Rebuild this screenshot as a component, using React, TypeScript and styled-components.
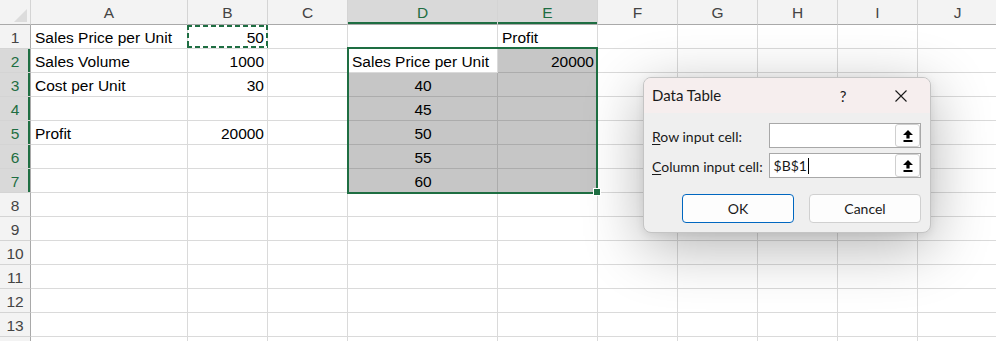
import styled, { createGlobalStyle, css } from "styled-components";

const GREEN = "#1e6e42";

type Align = "left" | "right" | "center";

type TCell = {
  text: string;
  align: Align;
};

const columns: { key: string; width: number }[] = [
  { key: "A", width: 157 },
  { key: "B", width: 80 },
  { key: "C", width: 80 },
  { key: "D", width: 150 },
  { key: "E", width: 100 },
  { key: "F", width: 80 },
  { key: "G", width: 80 },
  { key: "H", width: 80 },
  { key: "I", width: 80 },
  { key: "J", width: 80 },
];

const ROW_COUNT = 13;

const cells: Record<string, TCell> = {
  A1: { text: "Sales Price per Unit", align: "left" },
  B1: { text: "50", align: "right" },
  E1: { text: "Profit", align: "left" },
  A2: { text: "Sales Volume", align: "left" },
  B2: { text: "1000", align: "right" },
  D2: { text: "Sales Price per Unit", align: "left" },
  E2: { text: "20000", align: "right" },
  A3: { text: "Cost per Unit", align: "left" },
  B3: { text: "30", align: "right" },
  D3: { text: "40", align: "center" },
  D4: { text: "45", align: "center" },
  A5: { text: "Profit", align: "left" },
  B5: { text: "20000", align: "right" },
  D5: { text: "50", align: "center" },
  D6: { text: "55", align: "center" },
  D7: { text: "60", align: "center" },
};

// selected range D2:E7, active cell D2
const selCols = ["D", "E"];
const inSelRows = (row: number) => row >= 2 && row <= 7;

const GlobalStyle = createGlobalStyle`
  html, body {
    margin: 0;
    padding: 0;
    background: #ffffff;
  }
  * {
    box-sizing: border-box;
  }
`;

const Page = styled.div`
  position: relative;
  width: 996px;
  height: 341px;
  overflow: hidden;
  background: #ffffff;
  font-family: "Liberation Sans", Arial, sans-serif;
`;

const Sheet = styled.div`
  display: grid;
  grid-template-columns: 31px ${columns.map((c) => `${c.width}px`).join(" ")};
  grid-template-rows: 25px;
  grid-auto-rows: 24px;
  font-size: 15.5px;
  color: #000000;
`;

// every grid item gets its own line/column so the overlays don't push cells around
type Pos = { $col: number; $row: number };
const placed = css<Pos>`
  grid-column: ${(p) => p.$col};
  grid-row: ${(p) => p.$row};
`;

const Corner = styled.div`
  position: relative;
  grid-column: 1;
  grid-row: 1;
  background: #f3f3f3;
  border-right: 1px solid #d4d4d4;
  border-bottom: 1px solid #a9a9a9;

  &::after {
    content: "";
    position: absolute;
    right: 3px;
    bottom: 2px;
    width: 13px;
    height: 13px;
    background: #dcdcdc;
    clip-path: polygon(100% 0, 100% 100%, 0 100%);
  }
`;

const ColumnHeader = styled.div<Pos & { $selected: boolean }>`
  ${placed}
  background: ${(p) => (p.$selected ? "#d9d9d9" : "#f3f3f3")};
  color: ${(p) => (p.$selected ? GREEN : "#444444")};
  border-right: 1px solid #d4d4d4;
  border-bottom: 1px solid #a9a9a9;
  text-align: center;
  padding-top: 1px;
  line-height: 23px;
  ${(p) =>
    p.$selected &&
    css`
      box-shadow: inset 0 -2px 0 ${GREEN};
    `}
`;

const RowHeader = styled.div<Pos & { $selected: boolean }>`
  ${placed}
  background: ${(p) => (p.$selected ? "#d9d9d9" : "#f3f3f3")};
  color: ${(p) => (p.$selected ? GREEN : "#444444")};
  border-right: 1px solid #a9a9a9;
  border-bottom: 1px solid #d4d4d4;
  text-align: center;
  padding-top: 2px;
  line-height: 21px;
  ${(p) =>
    p.$selected &&
    css`
      box-shadow: inset -2px 0 0 ${GREEN};
    `}
`;

const Cell = styled.div<Pos & { $align: Align; $shaded: boolean }>`
  ${placed}
  background: ${(p) => (p.$shaded ? "#c6c6c6" : "#ffffff")};
  border-right: 1px solid ${(p) => (p.$shaded ? "#acacac" : "#dadada")};
  border-bottom: 1px solid ${(p) => (p.$shaded ? "#acacac" : "#dadada")};
  text-align: ${(p) => p.$align};
  padding: 2px 3px 0 4px;
  line-height: 21px;
  white-space: nowrap;
  overflow: hidden;
`;

const CopyMarquee = styled.div`
  grid-column: 3;
  grid-row: 2;
  margin: 0 0 1px -1px;
  z-index: 1;
  pointer-events: none;
  background:
    repeating-linear-gradient(90deg, ${GREEN} 0 5px, transparent 5px 8px) top / 100% 2px no-repeat,
    repeating-linear-gradient(90deg, ${GREEN} 0 5px, transparent 5px 8px) bottom / 100% 2px no-repeat,
    repeating-linear-gradient(180deg, ${GREEN} 0 5px, transparent 5px 8px) left / 2px 100% no-repeat,
    repeating-linear-gradient(180deg, ${GREEN} 0 5px, transparent 5px 8px) right / 2px 100% no-repeat;
`;

const SelectionBox = styled.div`
  position: relative;
  grid-column: 5 / 7;
  grid-row: 3 / 9;
  margin: -2px 0 -1px -1px;
  border: 2px solid ${GREEN};
  z-index: 1;
  pointer-events: none;
`;

const FillHandle = styled.span`
  position: absolute;
  right: -4px;
  bottom: -3px;
  width: 6px;
  height: 6px;
  background: ${GREEN};
  box-shadow: 0 0 0 1px #ffffff;
`;

/* ---- dialog ---- */

const Dialog = styled.div`
  position: absolute;
  left: 643px;
  top: 77px;
  width: 288px;
  height: 156px;
  display: flex;
  flex-direction: column;
  background: #efefef;
  border: 1px solid #c4c4c4;
  border-radius: 8px;
  overflow: hidden;
  box-shadow: 0 14px 60px rgba(0, 0, 0, 0.3), 0 2px 8px rgba(0, 0, 0, 0.08);
  font-family: Lato, "Liberation Sans", sans-serif;
  color: #1a1a1a;
`;

const TitleBar = styled.div`
  display: flex;
  align-items: center;
  height: 35px;
  flex: 0 0 auto;
  padding-left: 8px;
  background: #f6eeee;
`;

const TitleText = styled.span`
  flex: 1;
  font-size: 15px;
  line-height: 35px;
`;

const TitleButton = styled.span<{ $gap?: number }>`
  display: flex;
  align-items: center;
  justify-content: center;
  width: 46px;
  height: 35px;
  margin-right: ${(p) => p.$gap ?? 0}px;
  font-size: 15px;
`;

const Body = styled.div`
  display: flex;
  flex-direction: column;
  gap: 5px;
  padding: 10px 9px 0 8px;
`;

const FieldRow = styled.div`
  display: flex;
  align-items: center;
  height: 25px;
`;

const Label = styled.span`
  width: 117px;
  font-size: 14px;
  padding-top: 1px;
`;

const Mnemonic = styled.span`
  text-decoration: underline;
  text-underline-offset: 2px;
`;

const InputBox = styled.div`
  display: flex;
  align-items: center;
  width: 153px;
  height: 25px;
  background: #ffffff;
  border: 1px solid #a8a8a8;
  padding-left: 4px;
  font-size: 14px;
`;

const InputValue = styled.span`
  flex: 1;
  display: flex;
  align-items: center;
`;

const Caret = styled.span`
  display: inline-block;
  width: 1px;
  height: 16px;
  margin-left: 1px;
  background: #000000;
`;

const RefButton = styled.span`
  display: flex;
  align-items: center;
  justify-content: center;
  width: 25px;
  height: 23px;
  background: #fdfdfd;
  border: 1px solid #cfcfcf;
  border-radius: 3px;
`;

const ButtonRow = styled.div`
  display: flex;
  justify-content: flex-end;
  gap: 15px;
  margin-top: 11px;
`;

const DialogButton = styled.button<{ $primary?: boolean }>`
  width: 112px;
  height: 29px;
  font-family: Lato, "Liberation Sans", sans-serif;
  font-size: 14px;
  color: #1a1a1a;
  background: #fdfdfd;
  border: 1px solid ${(p) => (p.$primary ? "#0067c0" : "#d0d0d0")};
  border-radius: 4px;
  padding: 0;
`;

function ArrowIcon() {
  return (
    <svg width="10" height="12" viewBox="0 0 10 12">
      <path d="M5 0 L10 5 L6.6 5 L6.6 8.6 L3.4 8.6 L3.4 5 L0 5 Z" fill="#000000" />
      <rect x="0.5" y="10" width="9" height="2" fill="#000000" />
    </svg>
  );
}

function CloseIcon() {
  return (
    <svg width="12" height="12" viewBox="0 0 12 12">
      <path d="M0.5 0.5 L11.5 11.5 M11.5 0.5 L0.5 11.5" stroke="#1a1a1a" strokeWidth="1.1" />
    </svg>
  );
}

function DataTableDialog() {
  return (
    <Dialog>
      <TitleBar>
        <TitleText>Data Table</TitleText>
        <TitleButton $gap={12}>?</TitleButton>
        <TitleButton $gap={6}>
          <CloseIcon />
        </TitleButton>
      </TitleBar>
      <Body>
        <FieldRow>
          <Label>
            <Mnemonic>R</Mnemonic>ow input cell:
          </Label>
          <InputBox>
            <InputValue />
            <RefButton>
              <ArrowIcon />
            </RefButton>
          </InputBox>
        </FieldRow>
        <FieldRow>
          <Label>
            <Mnemonic>C</Mnemonic>olumn input cell:
          </Label>
          <InputBox>
            <InputValue>
              $B$1
              <Caret />
            </InputValue>
            <RefButton>
              <ArrowIcon />
            </RefButton>
          </InputBox>
        </FieldRow>
        <ButtonRow>
          <DialogButton $primary>OK</DialogButton>
          <DialogButton>Cancel</DialogButton>
        </ButtonRow>
      </Body>
    </Dialog>
  );
}

export default function App() {
  // one extra, unlabelled row peeks in under row 13
  const rows = Array.from({ length: ROW_COUNT + 1 }, (_, i) => i + 1);
  return (
    <Page>
      <GlobalStyle />
      <Sheet>
        <Corner />
        {columns.map((c, ci) => (
          <ColumnHeader
            key={c.key}
            $col={ci + 2}
            $row={1}
            $selected={selCols.includes(c.key)}
          >
            {c.key}
          </ColumnHeader>
        ))}
        {rows.map((row) => [
          <RowHeader
            key={`h${row}`}
            $col={1}
            $row={row + 1}
            $selected={inSelRows(row)}
          >
            {row <= ROW_COUNT ? row : null}
          </RowHeader>,
          ...columns.map((c, ci) => {
            const id = `${c.key}${row}`;
            const data = cells[id];
            const shaded =
              selCols.includes(c.key) && inSelRows(row) && id !== "D2";
            return (
              <Cell
                key={id}
                $col={ci + 2}
                $row={row + 1}
                $align={data?.align ?? "left"}
                $shaded={shaded}
              >
                {data?.text}
              </Cell>
            );
          }),
        ])}
        <CopyMarquee />
        <SelectionBox>
          <FillHandle />
        </SelectionBox>
      </Sheet>
      <DataTableDialog />
    </Page>
  );
}
